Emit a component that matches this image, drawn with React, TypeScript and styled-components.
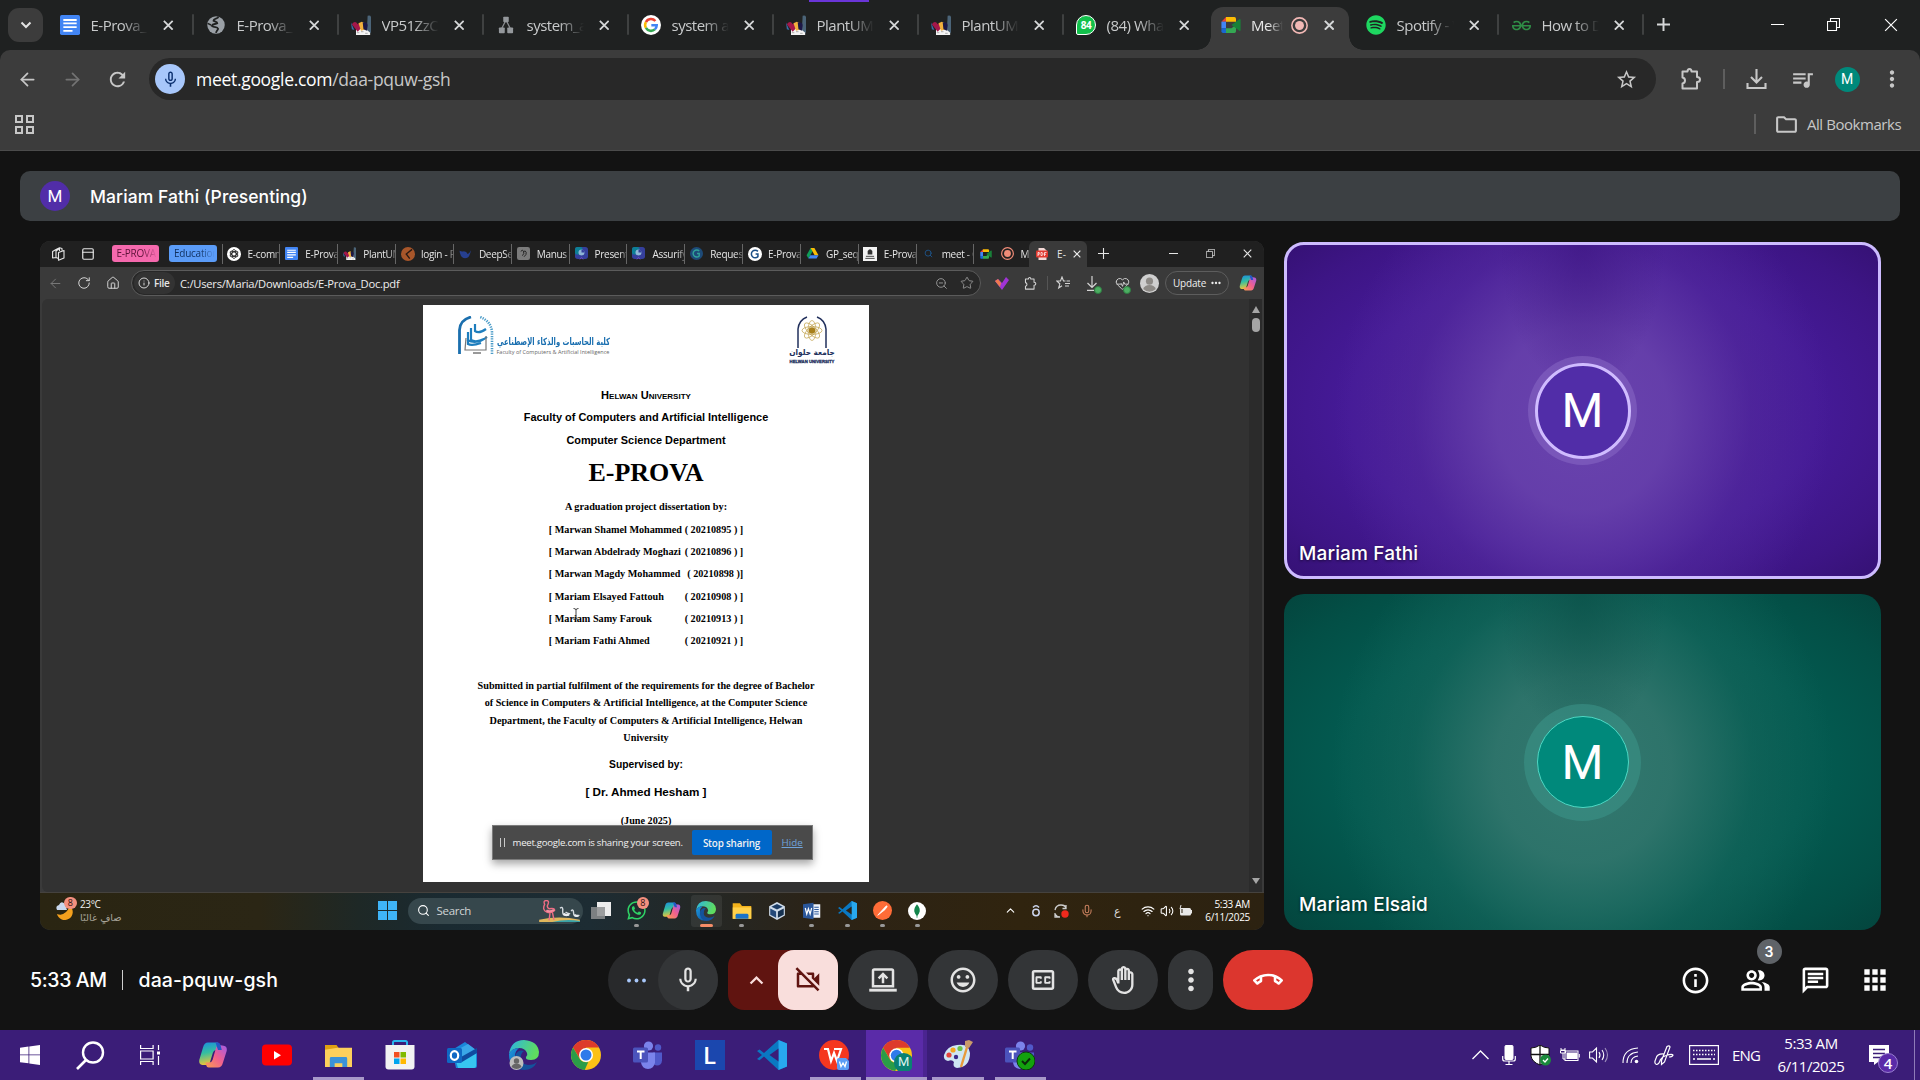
import React from 'react';
import styled, { createGlobalStyle, css } from 'styled-components';
import {
  MdMicNone, MdOutlineVideocamOff, MdOutlineMood, MdOutlineClosedCaption, MdOutlineBackHand,
  MdMoreVert, MdMoreHoriz, MdOutlineCallEnd, MdInfoOutline, MdOutlineChat, MdApps,
  MdStarBorder, MdQueueMusic, MdOutlineFolder, MdKeyboardArrowUp, MdRefresh,
} from 'react-icons/md';
import { FaWhatsapp, FaSpotify } from 'react-icons/fa';
import { SiGeeksforgeeks } from 'react-icons/si';
import {
  ArrowLeft, ArrowRight, RotateCw, House, Info, ZoomOut, Star, Search, ChevronUp,
  Wifi, Volume2, Mic, HeartPulse, PanelTop,
} from 'lucide-react';

const SEGOE = '"Open Sans", "Noto Sans", sans-serif';
const GOOGLE = 'Inter, Roboto, sans-serif';

const Global = createGlobalStyle`
  html, body { margin: 0; padding: 0; background: #131313; overflow: hidden; }
  * { box-sizing: border-box; }
  svg { display: block; flex: none; }
`;

/* ---------- shared pieces ---------- */

const Screen = styled.div`
  width: 1920px; height: 1080px; display: flex; flex-direction: column;
  background: #131313; overflow: hidden; font-family: ${SEGOE}; color: #fff;
`;
const Row = styled.div`display: flex; align-items: center;`;
const Cell = styled.div<{ $w: number; $ml?: number; $c?: string }>`
  width: ${p => p.$w}px; margin-left: ${p => p.$ml ?? 0}px; flex: none;
  display: flex; align-items: center; justify-content: center; color: ${p => p.$c ?? 'inherit'};
  position: relative;
`;

/* ---------- logos ---------- */

type L = { s?: number };
const Svg = ({ s = 20, vb = '0 0 24 24', children }: { s?: number; vb?: string; children: React.ReactNode }) => (
  <svg width={s} height={s} viewBox={vb} fill="none">{children}</svg>
);
const DocsLogo = ({ s }: L) => (
  <Svg s={s}><rect width="24" height="24" rx="2" fill="#4285f4" />
    <path d="M4 6h16M4 10h16M4 14.5h16M4 19h11" stroke="#fff" strokeWidth="2.2" /></Svg>
);
const GlobeLogo = ({ s }: L) => (
  <Svg s={s}><circle cx="12" cy="12" r="10.5" fill="#9aa0a6" />
    <path d="M15 2.500c-1.500 2.500-6 1.500-6 4.500 2 1.500 4.500.5 4.500 3-2 1.500-5.500 0-6.500 3 3 2.500 6.500.5 7.500 3.500-.5 2-2 2.500-2.500 5" stroke="#1f2121" strokeWidth="2.200" /><path d="M2 10l4 2" stroke="#1f2121" strokeWidth="1.800" /></Svg>
);
const PlantLogo = ({ s }: L) => (
  <Svg s={s}><path d="M6 14h17v10H6z" fill="#f4f4f4" /><path d="M20 1q3-1 4 1v20l-5-4z" fill="#4b6478" />
    <path d="M0 9l4 9-3-1z" fill="#3a6ea8" /><path d="M1 11q4-5 7 0l3-2 1 7-4 4z" fill="#a3174a" />
    <path d="M9 10l4-2 4 2 1 7-6 2z" fill="#f2b13c" /><path d="M14 9q6-1 6 4l-1 6-4-2z" fill="#1d1846" />
    <path d="M7 21h3M12 20h3M17 22h3" stroke="#bbb" strokeWidth="1.5" /></Svg>
);
const NodesLogo = ({ s }: L) => (
  <Svg s={s}><path d="M12 6L7 16M12 6l5 10" stroke="#8a8d91" strokeWidth="1.500" />
    <rect x="8.700" y="2" width="6.600" height="6.600" rx="1" fill="#94989c" /><rect x="3.500" y="15" width="7" height="7" rx="1" fill="#94989c" />
    <rect x="13.500" y="15" width="7" height="7" rx="1" fill="#94989c" /></Svg>
);
const GoogleLogo = ({ s }: L) => (
  <Svg s={s}><circle cx="12" cy="12" r="12" fill="#fff" />
    <path d="M17.3 7.2A7 7 0 0 0 5.9 8.5" stroke="#ea4335" strokeWidth="3" /><path d="M5.9 8.5a7 7 0 0 0 0 7" stroke="#fbbc04" strokeWidth="3" />
    <path d="M5.9 15.5a7 7 0 0 0 10.7 1.8" stroke="#34a853" strokeWidth="3" /><path d="M16.6 17.3a7 7 0 0 0 2.3-5.1H12.4" stroke="#4285f4" strokeWidth="3" /></Svg>
);
const MeetLogo = ({ s }: L) => (
  <Svg s={s}><path d="M6 2.500h10q2 0 2 2V8h-6V8H6z" fill="#fbbc04" /><path d="M6 2.500V8H.5z" fill="#ea4335" />
    <path d="M.5 8H6v8H.5z" fill="#4285f4" /><path d="M.5 16H6v5.500H2.500q-2 0-2-2z" fill="#1967d2" />
    <path d="M6 16h6.500l5.500-4v7.500q0 2-2 2H6z" fill="#34a853" /><path d="M18 8l-5.500 4 5.500 4 4 3q1.500.500 1.500-1V6q0-1.500-1.500-1z" fill="#188038" /></Svg>
);
const CopilotLogo = ({ s }: L) => (
  <Svg s={s}>
    <defs>
      <linearGradient id="cpA" x1="0" y1="0" x2="0.2" y2="1"><stop stopColor="#1b8de0" /><stop offset=".5" stopColor="#35bfa0" /><stop offset="1" stopColor="#e8c53a" /></linearGradient>
      <linearGradient id="cpB" x1="1" y1="0" x2="0" y2="1"><stop stopColor="#a05be8" /><stop offset=".5" stopColor="#f0608e" /><stop offset="1" stopColor="#f9a04e" /></linearGradient>
    </defs>
    <path d="M8 2h7.500q1.500 0 2 2l1 4h-4q-2 0-2.600 2.200L9.500 18q-.8 2-2.500 2H3.500Q.5 19.500 1 16L4 6q1-4 4-4z" fill="url(#cpA)" />
    <path d="M16 22H8.500q-1.500 0-2-2l-.6-2H9q2 0 2.700-2.200L14.500 6q.8-2 2.500-2l3.500.5q3 .5 2.500 4L20 18q-1 4-4 4z" fill="url(#cpB)" />
    <path d="M14 2h2q1.500 0 2 2l1 4h-3z" fill="#2457c5" /></Svg>
);
const YoutubeLogo = ({ s }: L) => (
  <Svg s={s} vb="0 0 30 30"><rect x="0" y="4.500" width="30" height="21" rx="4" fill="#f00" /><path d="M12 11v8.500l7-4.200z" fill="#fff" /></Svg>
);
const ExplorerLogo = ({ s }: L) => (
  <Svg s={s} vb="0 0 28 28"><path d="M0 3h12l2 3v6H0z" fill="#e0a012" /><path d="M0 8l13-2h15v20H0z" fill="#fdd05c" />
    <path d="M5 26V17q0-1.500 1.500-1.500h15q1.500 0 1.500 1.500v9h-5v-4h-8v4z" fill="#3c93d8" /></Svg>
);
const FolderLogo = ({ s }: L) => (
  <Svg s={s} vb="0 0 28 28"><path d="M1 3h10l3 4h13v18H1z" fill="#f3b21b" /><path d="M1 9h26v16H1z" fill="#ffd04a" />
    <path d="M5 25v-5q0-2 2-2h14q2 0 2 2v5z" fill="#1973c8" /></Svg>
);
const StoreLogo = ({ s }: L) => (
  <Svg s={s} vb="0 0 30 30"><path d="M8 5V2.500Q8 1 9.500 1h11Q22 1 22 2.500V5" stroke="#29b6ef" strokeWidth="2" />
    <path d="M0.500 5h29v21.500q0 3-3 3h-23q-3 0-3-3z" fill="#f2f2f2" />
    <path d="M9 12h5.500v5.500H9z" fill="#f25022" /><path d="M15.500 12H21v5.500h-5.500z" fill="#7fba00" /><path d="M9 18.500h5.500V24H9z" fill="#00a4ef" /><path d="M15.500 18.500H21V24h-5.500z" fill="#ffb900" /></Svg>
);
const OutlookLogo = ({ s }: L) => (
  <Svg s={s} vb="0 0 30 30"><path d="M5 10L18 2l12 9v15q0 2-2 2H9z" fill="#1a86d9" /><path d="M10 10L21 4l8 6-14 12z" fill="#3aa7e8" />
    <path d="M9 21l20-10v15q0 2-2 2H11z" fill="#37c5f0" /><path d="M14 17l16-9v5l-15 9z" fill="#0f4ca0" />
    <rect x="0" y="8" width="15" height="15" rx="1.500" fill="#0f68c4" /><ellipse cx="7.500" cy="15.500" rx="3.700" ry="4.300" stroke="#fff" strokeWidth="2.200" /></Svg>
);
const EdgeLogo = ({ s, user }: L & { user?: boolean }) => (
  <Svg s={s} vb="0 0 30 30">
    <defs>
      <linearGradient id="egA" x1="0" y1="0" x2="1" y2=".3"><stop stopColor="#2bb4e6" /><stop offset="1" stopColor="#5fdc5e" /></linearGradient>
      <linearGradient id="egB" x1="0" y1="0" x2="1" y2="1"><stop stopColor="#1c9ae0" /><stop offset="1" stopColor="#0d4f9e" /></linearGradient>
    </defs>
    <path d="M0 14Q2 0 15 0q14 1 15 12 0 8-8 8-6 0-5-3 2-2 1-4-2-5-8-5Q3 8 0 14z" fill="url(#egA)" />
    <path d="M0 14q3-6 10-6-4 3-4 8 0 8 9 13.800Q0 30 0 14z" fill="url(#egB)" />
    <path d="M12 15q-2 9 7 10 6 0 9-3-4 8-13 8Q5 27 6 16q3-7 9-5-2 1-3 4z" fill="#14529c" />
    {user && <><circle cx="7.500" cy="23" r="7" fill="#bdbdbd" /><circle cx="7.500" cy="21" r="2.700" fill="#666" /><path d="M2.500 27q1-3.500 5-3.500t5 3.500q-5 4-10 0z" fill="#666" /></>}
  </Svg>
);
const ChromeLogo = ({ s, badge }: L & { badge?: boolean }) => (
  <Svg s={s} vb="0 0 30 30"><circle cx="15" cy="15" r="15" fill="#fbc116" />
    <path d="M2 7.500A15 15 0 0 1 28 7.500H15L9 19z" fill="#dd3a2b" /><path d="M2 7.500L8.800 19q3 4 8.500 3l-3.600 7.900A15 15 0 0 1 2 7.500z" fill="#2a9c48" />
    <circle cx="15" cy="15" r="7" fill="#fff" /><circle cx="15" cy="15" r="5.500" fill="#2f7bea" />
    {badge && <circle cx="22" cy="22" r="9.500" fill="#0b8173" />}
  </Svg>
);
const TeamsLogo = ({ s, ok }: L & { ok?: boolean }) => (
  <Svg s={s} vb="0 0 30 30"><circle cx="15.500" cy="6" r="4.600" fill="#7b83eb" /><circle cx="25" cy="7.500" r="3.200" fill="#5059c9" />
    <path d="M20 12.500h9v8q-.5 5-5 5-3 0-4-3z" fill="#5059c9" /><path d="M8 12.500h14v10q-1 6-7 6.500-6-.5-7-6.500z" fill="#7b83eb" />
    <rect x="0" y="7.500" width="15" height="15" rx="1.500" fill="#4b53bc" /><path d="M4 11.500h7.500M7.700 11.500V19" stroke="#fff" strokeWidth="2" />
    {ok && <><circle cx="21" cy="21" r="9" fill="#13a10e" stroke="#0b3d0a" /><path d="M17 21l3 3 5-5.500" stroke="#0c2a0b" strokeWidth="2" /></>}
  </Svg>
);
const CodeLogo = ({ s, hole = '#3b1d78' }: L & { hole?: string }) => (
  <Svg s={s} vb="0 0 30 30"><path d="M21.500 0L30 3.500v23L21.500 30 7 16.500l-4.500 3.800L0 19l5-4-5-4 2.500-1.500L7 13z" fill="#0a78c2" />
    <path d="M21.500 0L30 3.500v23L21.500 30z" fill="#28a8ee" /><path d="M21.500 8.500V21.500L12.500 15z" fill={hole} /></Svg>
);
const WpsLogo = ({ s }: L) => (
  <Svg s={s} vb="0 0 30 30"><circle cx="15" cy="15" r="15" fill="#f5371f" />
    <path d="M5 9h4l3 12 3-8 3 8 4-12H15" stroke="#fff" strokeWidth="2.200" /><path d="M18 20q0-2 2-2h7l3 3v7q0 2-2 2h-8q-2 0-2-2z" fill="#5b9cf5" />
    <path d="M20.500 21.500l1.500 5 2-3.500 2 3.500 1.500-5" stroke="#fff" strokeWidth="1.300" /></Svg>
);
const PaintLogo = ({ s }: L) => (
  <Svg s={s} vb="0 0 30 30"><path d="M14 5q12-2 13 8 0 14-13 15-5-1-3-6-2-3-6-1Q0 20 1 15 4 6 14 5z" fill="#cfe6f3" />
    <circle cx="6" cy="15" r="2.600" fill="#e5443a" /><circle cx="10" cy="10" r="2.600" fill="#f5a623" /><circle cx="17" cy="8.500" r="2.600" fill="#6cc04a" />
    <circle cx="13" cy="17" r="2.200" fill="#3b2a8c" /><path d="M25 4L18 27" stroke="#e79a3c" strokeWidth="2.400" /><path d="M22 1l4-1 4 2-4 6-4-1z" fill="#c99a6a" /></Svg>
);
const PostmanLogo = ({ s }: L) => (
  <Svg s={s}><circle cx="12" cy="12" r="12" fill="#ff6c37" /><path d="M6 18l8-9 3-3 1 1-3 4z" fill="#fff" stroke="#fff" strokeWidth="1" /></Svg>
);
const MongoLogo = ({ s }: L) => (
  <Svg s={s}><circle cx="12" cy="12" r="12" fill="#fff" /><path d="M12 3q4.500 5 3.500 10-1 4-3.500 5.500Q9.500 17 8.500 13 7.500 8 12 3z" fill="#13854c" /><path d="M12 14v7" stroke="#13854c" /></Svg>
);
const BoxLogo = ({ s }: L) => (
  <Svg s={s}><path d="M12 0l10.500 5.500v12.500L12 24 1.500 18V5.500z" fill="#cfdcea" /><path d="M12 2.500l7.500 3.800L12 10 4.500 6.300z" fill="#1b3c66" />
    <path d="M3 8.500l7.800 4v8.500L3 17z" fill="#23497a" /><path d="M21 8.500l-7.800 4v8.500L21 17z" fill="#15304f" /></Svg>
);
const WordLogo = ({ s }: L) => (
  <Svg s={s}><rect x="10" y="3" width="13" height="18" fill="#eef3fb" /><path d="M15 7h6M15 10h6M15 13h6M15 16h6" stroke="#2b579a" strokeWidth="1.400" />
    <path d="M0 3l14-2v22L0 21z" fill="#2b579a" /><path d="M3 8l2 8 2.200-7L9.500 16l2-8" stroke="#fff" strokeWidth="1.600" /></Svg>
);
const DriveLogo = ({ s }: L) => (
  <Svg s={s}><path d="M8.500 2h7l-7.500 13-3.500 6L1 15z" fill="#0f9d58" /><path d="M8.500 2h7L23 15h-7z" fill="#fbbc04" /><path d="M8 15h15l-3.500 6h-15z" fill="#4285f4" /></Svg>
);
const PdfLogo = ({ s }: L) => (
  <Svg s={s}><path d="M5 0h11l5 5v19H5z" fill="#f4d9d6" /><rect x="0" y="5" width="24" height="14" rx="2" fill="#e0392f" />
    <path d="M4 16V9h2.500v3.500H4M10 9v6h2q2-1 2-3t-2-3zM17 16V9h4M17 12.500h3" stroke="#fff" strokeWidth="1.500" /></Svg>
);
const Disc = ({ s, bg, fg }: { s?: number; bg: string; fg: string }) => (
  <Svg s={s}><circle cx="12" cy="12" r="12" fill={bg} /><path d="M17 7.500a6.500 6.500 0 1 0 0 9V12h-4" stroke={fg} strokeWidth="2.600" /></Svg>
);
const OpenAiLogo = ({ s }: L) => (
  <Svg s={s}><circle cx="12" cy="12" r="12" fill="#fff" />
    <g stroke="#222" strokeWidth="1.500"><ellipse cx="12" cy="12" rx="3.500" ry="7.500" /><ellipse cx="12" cy="12" rx="3.500" ry="7.500" transform="rotate(60 12 12)" /><ellipse cx="12" cy="12" rx="3.500" ry="7.500" transform="rotate(120 12 12)" /></g></Svg>
);
const LoginLogo = ({ s }: L) => (
  <Svg s={s}><circle cx="12" cy="12" r="12" fill="#a8562a" /><path d="M19 4L9 12l6 8" stroke="#2a1a14" strokeWidth="2.400" /></Svg>
);
const WhaleLogo = ({ s }: L) => (
  <Svg s={s}><path d="M1 7q4 2 8 1 5 0 7 5 4-2 6-7-1 8-5 13Q9 23 4 17 1 12 1 7z" fill="#263f8f" /></Svg>
);
const ManusLogo = ({ s }: L) => (
  <Svg s={s}><rect width="24" height="24" rx="4" fill="#7b7b7b" /><path d="M7 8q3-4 5 0t-2 8M12 8q4-2 5 2t-4 8" stroke="#222" strokeWidth="1.800" /></Svg>
);
const SlidesLogo = ({ s }: L) => (
  <Svg s={s}><rect width="24" height="22" rx="5" fill="#353f9c" /><rect width="14" height="14" rx="4" fill="#0d7f96" /><circle cx="12" cy="10" r="5.500" fill="#8fb6d6" /><path d="M12 10V4.500a5.500 5.500 0 0 1 5.500 5.500z" fill="#353f9c" /><path d="M12 19l-3 4M12 19l3 4" stroke="#7b4bc0" strokeWidth="1.500" /></Svg>
);
const UniLogo = ({ s }: L) => (
  <Svg s={s}><rect width="24" height="24" fill="#f3f3f3" /><path d="M8 13V7q4-6 8 0v6z" fill="#333" /><path d="M5 16h14M4 19.500h16" stroke="#333" strokeWidth="1.500" /></Svg>
);
const RecDot = ({ s = 16, c = '#f2b8b5' }: L & { c?: string }) => (
  <Svg s={s}><circle cx="12" cy="12" r="10.800" stroke={c} strokeWidth="2.200" /><circle cx="12" cy="12" r="6.300" fill={c} /></Svg>
);
const GroupIcon = ({ s }: L) => (
  <svg width={s} height={s} viewBox="0 0 24 24" fill="currentColor">
    <path d="M16.670 13.130C18.040 14.060 19 15.320 19 17v3h4v-3c0-2.180-3.570-3.470-6.330-3.870zM15 12c2.210 0 4-1.790 4-4s-1.790-4-4-4c-.47 0-.91.1-1.330.24C14.500 5.270 15 6.580 15 8s-.5 2.730-1.330 3.760c.42.14.86.24 1.330.24z" />
    <path fillRule="evenodd" d="M9 12c2.210 0 4-1.790 4-4s-1.790-4-4-4-4 1.790-4 4 1.790 4 4 4zm0-6c1.100 0 2 .9 2 2s-.9 2-2 2-2-.9-2-2 .9-2 2-2z" />
    <path fillRule="evenodd" d="M9 13c-2.670 0-8 1.340-8 4v3h16v-3c0-2.660-5.330-4-8-4zm6 5H3v-.99C3.200 16.290 6.300 15 9 15s5.800 1.290 6 2v1z" />
  </svg>
);
const PuzzleIcon = ({ s, w }: { s: number; w: number }) => (
  <svg width={s} height={s} viewBox="0 0 22 22" fill="none" stroke="currentColor" strokeWidth={w} strokeLinejoin="round"><path d="M2.500 3.500h5q0-2.500 2-2.500t2 2.500h5.500v5.500q3 0 3 2.500t-3 2.500V20.500H2.500V15.500q2.500-.5 2.500-3t-2.500-3z" /></svg>
);
const Cross = ({ s = 10, w = 1.8 }: { s?: number; w?: number }) => (
  <svg width={s} height={s} viewBox="0 0 10 10"><path d="M.8.8l8.400 8.400M9.200.8L.8 9.200" stroke="currentColor" strokeWidth={w * 10 / s} /></svg>
);
const Plus = ({ s = 13, w = 1.8 }: { s?: number; w?: number }) => (
  <svg width={s} height={s} viewBox="0 0 12 12"><path d="M6 0v12M0 6h12" stroke="currentColor" strokeWidth={w} /></svg>
);
const Restore = ({ s = 13 }: L) => (
  <svg width={s} height={s} viewBox="0 0 13 13" fill="none" stroke="currentColor" strokeWidth="1.100"><path d="M.5 3.500h9v9h-9zM3.500 3.500v-3h9v9h-3" /></svg>
);
const Dash = ({ s = 13 }: L) => (
  <svg width={s} height="2" viewBox={`0 0 ${s} 2`}><path d={`M0 .5h${s}`} stroke="currentColor" /></svg>
);

/* ---------- Chrome ---------- */

const TabStrip = styled.div`
  height: 50px; background: #1f2121; display: flex; align-items: flex-start; flex: none; padding-left: 8px;
  position: relative;
`;
const AccentLine = styled.div`position: absolute; left: 809px; top: 0; width: 60px; height: 1.500px; background: #6a35d8;`;
const TabSearch = styled.div`
  width: 35px; height: 34px; margin: 8px 4.500px 0 0; border-radius: 11px; background: #3c3c3c; flex: none;
  display: flex; align-items: center; justify-content: center;
`;
const Tab = styled.div<{ $active?: boolean; $first?: boolean; $sep?: boolean }>`
  width: 145px; height: 36px; margin-top: 7px; flex: none; display: flex; align-items: center;
  padding-left: ${p => (p.$first ? 12.5 : 13.5)}px; position: relative;
  ${p => p.$sep && css`&::after { content: ''; position: absolute; right: -1px; top: 7px; width: 2px; height: 21px; background: #3f4141; border-radius: 1px; }`}
  ${p => p.$active && css`
    background: #3c3c3c; border-radius: 12px 12px 0 0; height: 43px; padding-bottom: 7px; width: 137.500px; margin-left: 3.500px; margin-right: 4px; padding-left: 9.500px;
    &::before, &::after { content: ''; position: absolute; bottom: 0; width: 14px; height: 14px; }
    &::before { left: -14px; background: radial-gradient(circle at 0 0, transparent 13.500px, #3c3c3c 14px); }
    &::after { right: -14px; background: radial-gradient(circle at 100% 0, transparent 13.500px, #3c3c3c 14px); }
  `}
`;
const TabTitle = styled.div<{ $w?: number; $on?: boolean; $ml?: number }>`
  margin-left: ${p => p.$ml ?? 10.5}px; width: ${p => p.$w ?? 57}px; overflow: hidden; white-space: nowrap;
  font-size: 15px; letter-spacing: -0.5px; line-height: 22px; color: ${p => (p.$on ? '#e8e8e8' : '#c8cacb')};
  mask-image: linear-gradient(90deg, #000 55%, transparent 100%);
`;
const TabClose = styled.div<{ $ml?: number }>`margin-left: ${p => p.$ml ?? 15.5}px; color: #d5d7d8;`;
const CaptionCell = styled.div`height: 49px; display: flex; align-items: center;`;

const Toolbar = styled.div`
  height: 50px; background: #3c3c3c; border-radius: 10px 10px 0 0; display: flex; align-items: center; flex: none;
  padding-top: 8px; color: #c7c7c7;
`;
const ToolbarBack = styled.div`background: #1f2121; flex: none;`;
const Omnibox = styled.div`
  width: 1507px; height: 42px; margin-left: 17px; border-radius: 21px; background: #282828; display: flex; align-items: center;
  padding: 0 18px 0 6px; flex: none;
`;
const MicChip = styled.div`width: 30px; height: 30px; border-radius: 50%; background: #a8c7fa; color: #0b2f6e; display: flex; align-items: center; justify-content: center;`;
const Url = styled.div`
  margin-left: 11px; flex: 1; font-size: 17.500px; letter-spacing: -0.3px; color: #c7c7c7;
  b { font-weight: 400; color: #fff; }
`;
const Bookmarks = styled.div`
  height: 51px; background: #3c3c3c; border-bottom: 1px solid #4b4b4b; display: flex; align-items: center; flex: none;
  padding: 0 18px 2px 15px; justify-content: space-between; color: #c7c7c7;
`;
const BookText = styled.div`font-size: 15px; letter-spacing: -0.45px; margin-left: 8px; white-space: nowrap; width: 95px;`;
const VLine = styled.div<{ $h: number; $c: string; $w?: number; $ml?: number; $mr?: number }>`
  width: ${p => p.$w ?? 2}px; height: ${p => p.$h}px; background: ${p => p.$c}; flex: none;
  margin-left: ${p => p.$ml ?? 0}px; margin-right: ${p => p.$mr ?? 0}px;
`;
const Round = styled.div<{ $s: number; $bg: string; $f: number }>`
  width: ${p => p.$s}px; height: ${p => p.$s}px; border-radius: 50%; background: ${p => p.$bg}; color: #fff; flex: none;
  display: flex; align-items: center; justify-content: center; font: 400 ${p => p.$f}px Roboto, sans-serif;
`;
const WaDisc = styled.div`
  width: 20px; height: 20px; border-radius: 50% 50% 50% 2px; background: #12c04b; border: 1.500px solid #fff;
  display: flex; align-items: center; justify-content: center; font: 700 10px "Open Sans", sans-serif; color: #fff; letter-spacing: -0.500px;
`;

const chromeTabs: { title: string; icon: React.ReactNode; sep?: boolean; active?: boolean }[] = [
  { title: 'E-Prova_Doc', icon: <DocsLogo />, sep: true },
  { title: 'E-Prova_Doc', icon: <GlobeLogo />, sep: true },
  { title: 'VP51ZzCm', icon: <PlantLogo />, sep: true },
  { title: 'system_arch', icon: <NodesLogo />, sep: true },
  { title: 'system arch', icon: <GoogleLogo />, sep: true },
  { title: 'PlantUML', icon: <PlantLogo />, sep: true },
  { title: 'PlantUML', icon: <PlantLogo />, sep: true },
  { title: '(84) WhatsApp', icon: <WaDisc>84</WaDisc> },
  { title: 'Meet', icon: <MeetLogo />, active: true },
  { title: 'Spotify - W', icon: <FaSpotify size={20} color="#1ed760" />, sep: true },
  { title: 'How to Dr', icon: <SiGeeksforgeeks size={19} color="#2f8d46" />, sep: true },
];

const ChromeHead = () => (
  <>
    <TabStrip>
      <AccentLine />
      <TabSearch><svg width="12" height="8" viewBox="0 0 12 8"><path d="M1.500 1.500L6 6l4.500-4.500" stroke="#e3e3e3" strokeWidth="2" fill="none" /></svg></TabSearch>
      {chromeTabs.map((t, i) => (
        <Tab key={i} $active={t.active} $first={i === 0} $sep={t.sep}>
          <Cell $w={20}>{t.icon}</Cell>
          <TabTitle $w={t.active ? 32 : 57} $on={t.active}>{t.title}</TabTitle>
          {t.active
            ? <><Cell $w={17} $ml={7.5}><RecDot s={17} /></Cell><TabClose $ml={16}><Cross s={10.5} w={2} /></TabClose></>
            : <TabClose $ml={i === 0 ? 15.5 : 15}><Cross s={10.5} /></TabClose>}
        </Tab>
      ))}
      <Row>
        <Cell $w={20} $ml={11} $c="#d5d7d8"><CaptionCell><Plus /></CaptionCell></Cell>
        <Cell $w={20} $ml={94}><CaptionCell><Dash /></CaptionCell></Cell>
        <Cell $w={20} $ml={36}><CaptionCell><Restore /></CaptionCell></Cell>
        <Cell $w={20} $ml={37.5}><CaptionCell><Cross s={14} w={1.2} /></CaptionCell></Cell>
      </Row>
    </TabStrip>
    <ToolbarBack>
      <Toolbar>
        <Cell $w={30} $ml={12.5}><ArrowLeft size={21} strokeWidth={2} /></Cell>
        <Cell $w={30} $ml={14.5} $c="#737373"><ArrowRight size={21} strokeWidth={2} /></Cell>
        <Cell $w={30} $ml={15}><MdRefresh size={23} /></Cell>
        <Omnibox>
          <MicChip><MdMicNone size={19} /></MicChip>
          <Url><b>meet.google.com</b>/daa-pquw-gsh</Url>
          <MdStarBorder size={23} />
        </Omnibox>
        <Cell $w={24} $ml={23}><PuzzleIcon s={22} w={2} /></Cell>
        <VLine $h={20} $c="#5e5e5e" $ml={19.5} />
        <Cell $w={24} $ml={20}>
          <svg width="21" height="21" viewBox="0 0 21 21" fill="none" stroke="currentColor" strokeWidth="2.100"><path d="M10.500 0v13M5 8l5.500 5.500L16 8M1.500 14v5h18v-5" /></svg>
        </Cell>
        <Cell $w={24} $ml={21.5}><MdQueueMusic size={25} /></Cell>
        <Cell $w={26} $ml={20}><Round $s={25} $bg="#00897b" $f={14}>M</Round></Cell>
        <Cell $w={24} $ml={20}><MdMoreVert size={26} /></Cell>
      </Toolbar>
    </ToolbarBack>
    <Bookmarks>
      <svg width="19" height="19" viewBox="0 0 19 19" fill="none" stroke="currentColor" strokeWidth="2"><path d="M1 1h6v6H1zM12 1h6v6h-6zM1 12h6v6H1zM12 12h6v6h-6z" /></svg>
      <Row><VLine $h={20} $c="#5e5e5e" $mr={18} /><MdOutlineFolder size={25} /><BookText>All Bookmarks</BookText></Row>
    </Bookmarks>
  </>
);

/* ---------- Shared screen ---------- */

const Shared = styled.div`
  width: 1224px; height: 689px; border-radius: 10px; overflow: hidden; background: #3a3a3a; flex: none;
  display: flex; flex-direction: column;
`;
const EdgeTabs = styled.div`height: 26px; background: #202020; display: flex; align-items: center; color: #e6e6e6; padding-bottom: 1px; flex: none;`;
const Pill = styled.div<{ $bg: string; $ml: number; $c: string }>`
  width: 47.500px; height: 17px; margin-left: ${p => p.$ml}px; border-radius: 3px; background: ${p => p.$bg}; color: ${p => p.$c}; padding-left: 5px;
  font-size: 10px; line-height: 16px; overflow: hidden; white-space: nowrap; letter-spacing: -0.25px; flex: none;
  span { display: block; mask-image: linear-gradient(90deg, #000 60%, transparent 95%); }
`;
const EdgeTab = styled.div`
  width: 57.850px; height: 20px; border-left: 1px solid #666; display: flex; align-items: center; overflow: hidden; flex: none; padding-left: 5px;
  font-size: 10px; letter-spacing: -0.3px; white-space: nowrap; gap: 7px;
  span { width: 32px; overflow: hidden; mask-image: linear-gradient(90deg, #000 80%, transparent 110%); }
`;
const EdgeMeet = styled.div`
  width: 56px; height: 20px; border-left: 1px solid #666; display: flex; align-items: center; padding-left: 6px; font-size: 10px; overflow: hidden; flex: none;
  em { font-style: normal; margin-left: 6px; mask-image: linear-gradient(90deg, #000 40%, transparent 80%); }
`;
const EdgeActive = styled.div`
  width: 58px; height: 26px; background: #3a3a3a; border-radius: 6px 6px 0 0; display: flex; align-items: center; padding-left: 7px;
  font-size: 10px; flex: none; align-self: flex-end; margin-bottom: -1px;
`;
const EdgeBar = styled.div`height: 32px; display: flex; align-items: center; color: #d4d4d4; flex: none;`;
const EdgeOmni = styled.div`
  width: 850px; height: 26px; border-radius: 13px; border: 1px solid #5b5b5b; background: #282828; margin-left: 9px; display: flex; align-items: center;
  flex: none; color: #9a9a9a;
`;
const FileChip = styled.div`
  height: 22px; width: 41px; border-radius: 11px; background: #333; margin-left: 2px; display: flex; align-items: center; padding-left: 4px; gap: 4px;
  font-size: 10px; font-weight: 600; color: #e6e6e6; letter-spacing: -0.3px;
`;
const EdgeUrl = styled.div`font-size: 11.200px; color: #eee; margin-left: 5px; flex: 1; letter-spacing: -0.250px;`;
const UpdatePill = styled.div`
  width: 64px; height: 24px; border: 1px solid #5d5d5d; border-radius: 12px; display: flex; align-items: center; justify-content: space-between; padding: 0 5px 0 7px;
  font-size: 10px; letter-spacing: -0.2px; margin-left: 6px; color: #eee; flex: none;
`;
const OkDot = styled.i`position: absolute; right: 0; bottom: -3px; width: 8px; height: 8px; border-radius: 50%; background: #4cae62; border: 1px solid #2f7d42;`;
const Viewer = styled.div`
  flex: none; margin: 0 2px 0 2px; background: #323232; border-radius: 6px; display: flex; position: relative; padding-top: 6px;
  padding-left: 381px; justify-content: space-between; height: 593px;
`;
const ScrollCol = styled.div`
  width: 13px; margin-top: -6px; background: #2b2b2b; display: flex; flex-direction: column; align-items: center; padding: 7px 0 8px; color: #a5a5a5;
`;
const Thumb = styled.div`width: 8px; height: 14px; border-radius: 4px; background: #a5a5a5; margin-top: 5px; margin-bottom: auto;`;

const Paper = styled.div`width: 446px; height: 577px; background: #fff; color: #000; display: flex; flex-direction: column; align-items: center; position: relative;`;
const PaperHead = styled.div`height: 79px; width: 100%; display: flex; justify-content: space-between; padding: 11px 34px 0 34.500px;`;
const FacultyLogo = styled.div`display: flex; gap: 3px;`;
const FacultyText = styled.div`
  padding-top: 18px; width: 114px; white-space: nowrap; text-align: left;
`;
const FacultyAr = styled.div`
  font: 700 10px/15px "DejaVu Sans Condensed", "DejaVu Sans", sans-serif; font-stretch: condensed; color: #1a6fb0; direction: rtl; width: max-content;
  transform: scaleX(0.76); transform-origin: left;
`;
const FacultyEn = styled.div`font: 400 5.500px/7px "Open Sans", sans-serif; color: #666;`;
const UniBlock = styled.div`
  display: flex; flex-direction: column; align-items: center; width: 46px; padding-top: 0; color: #22305c; white-space: nowrap;
`;
const UniAr = styled.div`font: 700 8.200px/10px "DejaVu Sans Condensed", "DejaVu Sans", sans-serif; font-stretch: condensed; margin-top: -1px;`;
const UniEn = styled.div`font: 700 4.250px/7px "Liberation Sans", sans-serif; margin-top: 1px; -webkit-text-stroke: 0.300px #22305c;`;
const Line = styled.div<{ $h: number; $f: number; $sans?: boolean; $mt?: number; $ls?: number; $caps?: boolean }>`
  height: ${p => p.$h}px; line-height: ${p => p.$h}px; font-size: ${p => p.$f}px; font-weight: 700; margin-top: ${p => p.$mt ?? 0}px;
  font-family: ${p => (p.$sans ? '"Liberation Sans", Arial, sans-serif' : '"Liberation Serif", "Times New Roman", serif')};
  letter-spacing: ${p => p.$ls ?? 0}px; white-space: pre; flex: none; ${p => p.$caps && 'font-variant: small-caps;'}
`;
const Student = styled.div`
  width: 194.500px; height: 22.200px; display: flex; justify-content: space-between; white-space: pre; flex: none;
  font: 700 10.200px/22.200px "Liberation Serif", serif;
`;
const Cursor = styled.div`position: absolute; left: 150px; top: 303px;`;
const SharePop = styled.div`
  position: absolute; left: 449.500px; top: 526px; width: 321px; height: 35px; background: #4a4a4a; border: 1px solid #7b7b7b; box-shadow: 0 4px 8px rgba(0,0,0,.35);
  display: flex; align-items: center; font-size: 10px; color: #f1f1f1; white-space: nowrap;
`;
const PauseBars = styled.div`width: 5px; height: 9px; border: solid #c9c9c9; border-width: 0 1.500px; margin-left: 7px;`;
const PopText = styled.div`margin-left: 8px; width: 171px; font-size: 9.600px; letter-spacing: -0.250px;`;
const StopBtn = styled.div`width: 80px; height: 25px; margin-left: 8px; border-radius: 2px; background: #0067c9; font-weight: 600; font-size: 9.900px; display: flex; align-items: center; justify-content: center; letter-spacing: -0.2px; flex: none;`;
const HideLink = styled.div`margin-left: 10px; font-size: 9.800px; color: #6fa3da; text-decoration: underline;`;

const InnerTask = styled.div`
  height: 38px; flex: none; display: flex; align-items: center; font-size: 10.500px; position: relative; border-top: 1px solid #45423e; padding-bottom: 2px;
  background: linear-gradient(90deg, #2a2512 0%, #2b2615 18%, #1e2826 26%, #1a2a31 33%, #1d2c33 45%, #252724 55%, #2c2316 64%, #30240f 80%, #2c2211 100%);
`;
const Weather = styled.div`width: 20px; height: 26px; margin-left: 15px; position: relative; flex: none;`;
const CountBadge = styled.div<{ $l: number; $t: number }>`
  position: absolute; left: ${p => p.$l}px; top: ${p => p.$t}px; width: 12.500px; height: 12.500px; border-radius: 50%; background: #f4907f; color: #301310; font-size: 9px; line-height: 12.500px; text-align: center;
`;
const WeatherText = styled.div`margin-left: 5px; width: 100px; flex: none;`;
const Degrees = styled.div`line-height: 13px; font-size: 10px; letter-spacing: -0.4px; color: #eee;`;
const Sky = styled.div`font: 9.800px/13px "DejaVu Sans", sans-serif; color: #a9a59a;`;
const SearchPill = styled.div`
  width: 175px; height: 26px; border-radius: 13px; background: #36474c; margin-left: 11px; display: flex; align-items: center; padding-left: 9px; flex: none;
  span { margin-left: 7px; flex: 1; font-size: 11.500px; letter-spacing: -0.3px; color: #d0d5d6; }
`;
const TaskIcon = styled.div<{ $on?: boolean; $run?: boolean }>`
  width: 35.150px; height: 34px; display: flex; align-items: center; justify-content: center; position: relative; flex: none;
  ${p => p.$on && css`&::before { content: ''; position: absolute; inset: 1px 2px; background: rgba(255,255,255,.07); border-radius: 3px; } `}
  ${p => (p.$run || p.$on) && css`&::after { content: ''; position: absolute; bottom: 1px; width: ${p.$on ? 13 : 5}px; height: 2.500px; border-radius: 2px; background: ${p.$on ? '#f58d68' : '#989898'}; }`}
  svg { position: relative; }
`;
const ArLetter = styled.div`width: 14px; margin-left: 16px; text-align: center; font: 11px/13px "DejaVu Sans", sans-serif; color: #ddd; padding-top: 2px;`;
const InnerClock = styled.div`margin-left: auto; margin-right: 14px; font-size: 10px; line-height: 13px; text-align: right; letter-spacing: -0.3px;`;

const edgeTabs: [string, React.ReactNode][] = [
  ['E-commerce', <OpenAiLogo s={14} />], ['E-Prova_', <DocsLogo s={13} />], ['PlantUML', <PlantLogo s={13} />], ['login - P', <LoginLogo s={14} />],
  ['DeepSeek', <WhaleLogo s={13} />], ['Manus', <ManusLogo s={13} />], ['Presenta', <SlidesLogo s={13} />], ['Assurify', <SlidesLogo s={13} />],
  ['Request', <Disc s={13} bg="#1d4a78" fg="#31a29a" />], ['E-Prova', <Disc s={14} bg="#fff" fg="#1b4f86" />], ['GP_sequ', <DriveLogo s={13} />],
  ['E-Prova', <UniLogo s={14} />], ['meet - G', <Search size={9} color="#1d5fa0" />],
];
const students: [string, string][] = [
  ['[ Marwan Shamel Mohammed', '( 20210895 ) ]'], ['[ Marwan Abdelrady Moghazi', '( 20210896 ) ]'], ['[ Marwan Magdy Mohammed', '( 20210898 )]'],
  ['[ Mariam Elsayed Fattouh', '( 20210908 ) ]'], ['[ Mariam Samy Farouk', '( 20210913 ) ]'], ['[ Mariam Fathi Ahmed', '( 20210921 ) ]'],
];

const SharedScreen = () => (
  <Shared>
    <EdgeTabs>
      <Cell $w={16} $ml={10.5}><svg width="13" height="14" viewBox="0 0 13 14" fill="none" stroke="currentColor" strokeWidth="1.100"><path d="M.6 4.500L4 2.500v8L.6 11zM4 4l3.500-2.500V4M4 10.500l2.500 1M6.500 5.500l5.500-2v7.500L6.500 13.300zM4 2.500L7.500.800 10 1.500v2" strokeLinejoin="round" /></svg></Cell>
      <Cell $w={16} $ml={13}><PanelTop size={14} strokeWidth={2} /></Cell>
      <Pill $bg="#f569ad" $c="#5b1238" $ml={16}><span>E-PROVA</span></Pill>
      <Pill $bg="#5b9cf8" $c="#10305f" $ml={10}><span>Education</span></Pill>
      <Cell $w={5} />
      {edgeTabs.map(([t, ic], i) => <EdgeTab key={i}><Cell $w={13}>{ic}</Cell><span>{t}</span></EdgeTab>)}
      <EdgeMeet><MeetLogo s={12} /><Cell $w={14} $ml={8}><RecDot s={13} c="#f08c78" /></Cell><em>Me</em></EdgeMeet>
      <EdgeActive><PdfLogo s={12} /><Cell $w={18} $ml={4}>E-</Cell><Cell $w={10} $ml={2}><Cross s={8} w={1.200} /></Cell></EdgeActive>
      <Cell $w={12} $ml={10}><Plus s={11} w={1.200} /></Cell>
      <Cell $w={12} $ml={58}><Dash s={9} /></Cell>
      <Cell $w={12} $ml={25}><Restore s={9} /></Cell>
      <Cell $w={12} $ml={25}><Cross s={9} w={1.100} /></Cell>
    </EdgeTabs>
    <EdgeBar>
      <Cell $w={18} $ml={6} $c="#777"><ArrowLeft size={15} strokeWidth={1.600} /></Cell>
      <Cell $w={18} $ml={11}><RotateCw size={14} strokeWidth={1.700} /></Cell>
      <Cell $w={18} $ml={11}><House size={14} strokeWidth={1.700} /></Cell>
      <EdgeOmni>
        <FileChip><Info size={12} strokeWidth={1.800} /><span>File</span></FileChip>
        <EdgeUrl>C:/Users/Maria/Downloads/E-Prova_Doc.pdf</EdgeUrl>
        <Cell $w={14}><ZoomOut size={13} strokeWidth={1.700} /></Cell>
        <Cell $w={14} $ml={11.5}><Star size={14} strokeWidth={1.500} /></Cell>
        <Cell $w={6} />
      </EdgeOmni>
      <Cell $w={14} $ml={13.5}><svg width="14" height="13" viewBox="0 0 14 13"><path d="M0 4l3-2 4 4 4-6 3 3-7 10z" fill="#a033d6" /><path d="M0 4l3-2 3 4-1 4z" fill="#ee7a4e" /></svg></Cell>
      <Cell $w={14} $ml={15}><PuzzleIcon s={13} w={1.800} /></Cell>
      <VLine $w={1} $h={14} $c="#555" $ml={9} />
      <Cell $w={16} $ml={7.5}><svg width="14" height="14" viewBox="0 0 14 14" fill="none" stroke="currentColor" strokeWidth="1.100"><path d="M9.500 5H7.500L6 1 4.500 5H.8l3 2.800L2.700 12 6 9.700M9 7.500h5M9 10h4M10.500 5H14" /></svg></Cell>
      <Cell $w={18} $ml={13}><svg width="14" height="15" viewBox="0 0 14 15" fill="none" stroke="currentColor" strokeWidth="1.200"><path d="M6 0v11M1.500 7L6 11.500 10.500 7M1 14.300h7" /></svg><OkDot /></Cell>
      <Cell $w={18} $ml={11}><HeartPulse size={15} strokeWidth={1.500} /><OkDot /></Cell>
      <Cell $w={19} $ml={9}><Svg s={19}><circle cx="12" cy="12" r="12" fill="#cfcfcf" /><circle cx="12" cy="9" r="4.500" fill="#8d8a86" /><path d="M4 19q2-5 8-5t8 5q-8 7-16 0z" fill="#8d8a86" /></Svg></Cell>
      <UpdatePill>Update<MdMoreHoriz size={14} /></UpdatePill>
      <Cell $w={18} $ml={10}><CopilotLogo s={18} /></Cell>
    </EdgeBar>
    <Viewer>
      <Paper>
        <PaperHead>
          <FacultyLogo>
            <svg width="36" height="38" viewBox="0 0 36 38" fill="none">
              <path d="M1.500 38V14Q2 4 13 1" stroke="#1b6fae" strokeWidth="2.800" />
              <path d="M34 38V16Q33 5 22 1" stroke="#4c9cc8" strokeWidth="2.600" strokeDasharray="1.300 1.100" />
              <path d="M10 16v12q4 2 13-1M13 12v12q5 3 13-1M17 8v7q4 3 11-2M9 24q10 5 20-3" stroke="#1d7dbd" strokeWidth="2.200" />
              <path d="M8 22l-1 12h21V20" stroke="#777" strokeWidth="1.200" /><path d="M15 37h8" stroke="#777" strokeWidth="1.500" />
            </svg>
            <FacultyText><FacultyAr>كلية الحاسبات والذكاء الإصطناعي</FacultyAr><FacultyEn>Faculty of Computers &amp; Artificial Intelligence</FacultyEn></FacultyText>
          </FacultyLogo>
          <UniBlock>
            <svg width="32" height="32" viewBox="0 0 32 32" fill="none">
              <path d="M2 32V13Q3 4 11 1M30 32V13Q29 4 21 1" stroke="#22305c" strokeWidth="1.500" />
              <g stroke="#c0a04a" strokeWidth=".7"><ellipse cx="16" cy="14.500" rx="10" ry="4" /><ellipse cx="16" cy="14.500" rx="10" ry="4" transform="rotate(45 16 14.500)" /><ellipse cx="16" cy="14.500" rx="10" ry="4" transform="rotate(90 16 14.500)" /><ellipse cx="16" cy="14.500" rx="10" ry="4" transform="rotate(135 16 14.500)" /></g>
              <circle cx="16" cy="14.500" r="3.300" fill="#a8801c" />
            </svg>
            <UniAr>جامعة حلوان</UniAr><UniEn>HELWAN UNIVERSITY</UniEn>
          </UniBlock>
        </PaperHead>
        <Line $h={22} $f={11.100} $sans $caps>Helwan University</Line>
        <Line $h={23} $f={10.950} $sans>Faculty of Computers and Artificial Intelligence</Line>
        <Line $h={23} $f={10.900} $sans>Computer Science Department</Line>
        <Line $h={42} $f={26}>E-PROVA</Line>
        <Line $h={25} $f={10.250}>A graduation project dissertation by:</Line>
        {students.map(([n, id]) => <Student key={id}><span>{n}</span><span>{id}</span></Student>)}
        <Line $h={17.6} $f={10.200} $mt={24.5}>Submitted in partial fulfilment of the requirements for the degree of Bachelor</Line>
        <Line $h={17.6} $f={10.200}>of Science in Computers &amp; Artificial Intelligence, at the Computer Science</Line>
        <Line $h={17.6} $f={10.200}>Department, the Faculty of Computers &amp; Artificial Intelligence, Helwan</Line>
        <Line $h={17.6} $f={10.200}>University</Line>
        <Line $h={22} $f={10.300} $sans $mt={7}>Supervised by:</Line>
        <Line $h={28} $f={11.700} $sans $mt={2}>[ Dr. Ahmed Hesham ]</Line>
        <Line $h={18} $f={10.200} $mt={5.5}>(June 2025)</Line>
        <Cursor><svg width="6" height="12" viewBox="0 0 6 12" fill="none" stroke="#333" strokeWidth=".9"><path d="M.5.5Q3 .5 3 2q0-1.500 2.500-1.500M3 2v8M.5 11.500Q3 11.500 3 10q0 1.500 2.500 1.500" /></svg></Cursor>
      </Paper>
      <ScrollCol>
        <svg width="8" height="7" viewBox="0 0 8 7"><path d="M4 0l4 7H0z" fill="currentColor" /></svg>
        <Thumb />
        <svg width="8" height="6" viewBox="0 0 8 6"><path d="M4 6L0 0h8z" fill="currentColor" /></svg>
      </ScrollCol>
      <SharePop><PauseBars /><PopText>meet.google.com is sharing your screen.</PopText><StopBtn>Stop sharing</StopBtn><HideLink>Hide</HideLink></SharePop>
    </Viewer>
    <InnerTask>
      <Weather>
        <svg width="20" height="26" viewBox="0 0 20 26"><path d="M15 8a8 8 0 1 1-13 8q8 3 13-8z" fill="#f5a11d" /><path d="M2 12q-2-4 2-5 2-5 6-1l2 6z" fill="#c9d8ee" /></svg>
        <CountBadge $l={9} $t={-1}>8</CountBadge>
      </Weather>
      <WeatherText><Degrees>23°C</Degrees><Sky>صافٍ غالبًا</Sky></WeatherText>
      <Cell $w={19} $ml={197.5}>
        <svg width="19" height="19" viewBox="0 0 19 19"><path d="M0 0h9v9H0zM10 0h9v9h-9zM0 10h9v9H0zM10 10h9v9h-9z" fill="#3fb4f7" /></svg>
      </Cell>
      <SearchPill>
        <Search size={13} strokeWidth={2} /><span>Search</span>
        <svg width="41" height="22" viewBox="0 0 37 20" fill="none">
          <path d="M0 18q18-4 37 0v2H0z" fill="#e0b75c" /><path d="M12 20q12-3 25-1v1z" fill="#39a3a8" />
          <path d="M5 4q-1.500-3.500 1.500-3.500T8 4Q6.500 6.500 9 8q5.500-1 5 1.500Q11 12.500 7 11 2.500 9 5 4zM10 11l-1 7.500M12 11l1.500 7" stroke="#ee6d84" strokeWidth="1.300" />
          <path d="M6.500 9.500q3 2 7-.5" stroke="#f58ea0" strokeWidth="2" />
          <path d="M19 7.500q2-2 2.500 1-.5 4 1 5 3.500 1.500 5-1-2-.5-3.500-1.500M29 10q2-2 2.200.8 0 3 1.300 3.700 2.500 1 4-1" stroke="#d5dbe0" strokeWidth="1.300" />
          <path d="M22 12.500q3 2 5 .5M32 13.500q2 1.500 3.500.5" stroke="#e9edf0" strokeWidth="2" />
        </svg>
        <Cell $w={3} />
      </SearchPill>
      <Cell $w={1} />
      <TaskIcon><svg width="20" height="18" viewBox="0 0 20 18"><rect x="6" y="0" width="14" height="14" fill="#ececec" /><rect x="0" y="5" width="14" height="12" fill="#8d8f90" opacity=".85" /></svg></TaskIcon>
      <TaskIcon $run><FaWhatsapp size={21} color="#2fd366" /><CountBadge $l={18} $t={3}>8</CountBadge></TaskIcon>
      <TaskIcon><CopilotLogo s={19} /></TaskIcon>
      <TaskIcon $on><EdgeLogo s={20} /></TaskIcon>
      <TaskIcon $run><FolderLogo s={20} /></TaskIcon>
      <TaskIcon><BoxLogo s={18} /></TaskIcon>
      <TaskIcon $run><WordLogo s={18} /></TaskIcon>
      <TaskIcon $run><CodeLogo s={19} hole="#2c2316" /></TaskIcon>
      <TaskIcon $run><PostmanLogo s={19} /></TaskIcon>
      <TaskIcon $run><MongoLogo s={18} /></TaskIcon>
      <Cell $w={14} $ml={68.5}><ChevronUp size={13} strokeWidth={2} /></Cell>
      <Cell $w={14} $ml={11.5}><svg width="10" height="14" viewBox="0 0 10 14" fill="none" stroke="#cdd6ee" strokeWidth="1.500"><circle cx="5" cy="8.500" r="3.200" /><path d="M2 3.500q3-3.500 6 0" /></svg></Cell>
      <Cell $w={14} $ml={12}><svg width="15" height="14" viewBox="0 0 15 14" fill="none" stroke="#ccc" strokeWidth="1.300"><path d="M1 6q1-5 6-5 4 0 5 3M12 1v3.500H8.500M1 9v4h4M1 10q2 3 5 3" /><circle cx="11" cy="10" r="3.700" fill="#f02a1d" stroke="none" /></svg></Cell>
      <Cell $w={14} $ml={11.5} $c="#c9805f"><Mic size={14} strokeWidth={1.800} /></Cell>
      <ArLetter>ع</ArLetter>
      <Cell $w={14} $ml={16.5}><Wifi size={14} strokeWidth={2} /></Cell>
      <Cell $w={14} $ml={5}><Volume2 size={14} strokeWidth={1.800} /></Cell>
      <Cell $w={14} $ml={5}><svg width="13" height="12" viewBox="0 0 13 12"><rect x="1" y="3" width="11" height="7.500" rx="1.500" fill="#e8e8e8" /><path d="M12.500 5v3.500M2 0l-1 4h3L2 8" stroke="#e8e8e8" fill="none" /><path d="M3 4v4" stroke="#2c2211" strokeWidth="1" /></svg></Cell>
      <InnerClock>5:33 AM<br />6/11/2025</InnerClock>
    </InnerTask>
  </Shared>
);

/* ---------- Meet ---------- */

const Meet = styled.div`height: 879px; flex: none; display: flex; flex-direction: column; padding: 20px 20px 0; font-family: ${GOOGLE};`;
const Banner = styled.div`
  height: 50px; flex: none; border-radius: 10px; background: #3c4043; display: flex; align-items: center; padding-left: 20px; gap: 20px;
  font-size: 17.500px; font-weight: 500; letter-spacing: 0.080px;
`;
const Stage = styled.div`display: flex; margin-top: 20px; padding-left: 20px; gap: 20px; height: 689px; flex: none; font-family: ${SEGOE};`;
const Tiles = styled.div`display: flex; flex-direction: column; gap: 15px; padding-top: 1px; width: 597px; font-family: ${GOOGLE};`;
const Tile = styled.div<{ $purple?: boolean }>`
  flex: none; height: ${p => (p.$purple ? 337 : 336)}px; border-radius: 20px; display: flex; align-items: center; justify-content: center; position: relative;
  ${p => p.$purple
    ? css`border: 3px solid #cdbbff;
      background: radial-gradient(ellipse 14% 44% at 50% 0%, rgba(62,22,132,.7), rgba(62,22,132,0)),
        radial-gradient(ellipse 42% 80% at 50% 52%, rgba(107,70,175,.95) 0%, rgba(104,66,172,.9) 35%, rgba(86,46,158,.5) 68%, rgba(70,27,152,0) 100%),
        radial-gradient(ellipse 72% 76% at 50% 50%, #471b99 0%, #451a97 55%, #3d1585 80%, #331070 100%);`
    : css`background: radial-gradient(ellipse 14% 44% at 50% 0%, rgba(10,80,72,.7), rgba(10,80,72,0)),
        radial-gradient(ellipse 42% 80% at 50% 52%, rgba(54,122,113,.95) 0%, rgba(50,118,109,.9) 35%, rgba(26,104,94,.5) 68%, rgba(3,92,81,0) 100%),
        radial-gradient(ellipse 72% 76% at 50% 50%, #035c51 0%, #035a50 55%, #034f46 80%, #04423b 100%);`}
`;
const Halo = styled.div<{ $s: number; $bg: string }>`width: ${p => p.$s}px; height: ${p => p.$s}px; border-radius: 50%; background: ${p => p.$bg}; display: flex; align-items: center; justify-content: center;`;
const Face = styled.div<{ $s: number; $bg: string; $b: string }>`
  width: ${p => p.$s}px; height: ${p => p.$s}px; border-radius: 50%; background: ${p => p.$bg}; border: ${p => p.$b}; display: flex; align-items: center; justify-content: center;
  font: 400 48px Roboto, sans-serif; color: #fff;
`;
const Name = styled.div<{ $l: number; $b: number }>`
  position: absolute; left: ${p => p.$l}px; bottom: ${p => p.$b}px; font-size: 19px; line-height: 24px; font-weight: 500; letter-spacing: 0.15px; text-shadow: 0 1px 3px rgba(0,0,0,.6);
`;
const Controls = styled.div`height: 60px; margin-top: 20px; display: flex; align-items: center; flex: none; position: relative; color: #e3e3e3;`;
const TimeCode = styled.div`
  width: 588px; display: flex; align-items: center; padding-left: 10px; font-size: 19.500px; font-weight: 500; color: #fff; letter-spacing: 0.080px; flex: none; white-space: nowrap;
  span { width: 92px; letter-spacing: -0.350px; }
`;
const Btn = styled.div<{ $w: number; $bg?: string; $r?: number; $c?: string }>`
  width: ${p => p.$w}px; height: 60px; border-radius: ${p => p.$r ?? 30}px; background: ${p => p.$bg ?? '#333537'}; color: ${p => p.$c ?? '#e3e3e3'};
  display: flex; align-items: center; justify-content: center; margin-right: 10px; flex: none;
`;
const Group = styled.div<{ $bg: string; $r: number }>`
  width: 110px; height: 60px; border-radius: ${p => p.$r}px; background: ${p => p.$bg}; display: flex; align-items: center; flex: none; margin-right: 10px; padding-left: 7px;
  & > ${Btn} { margin: 0; }
`;
const MeetRight = styled.div`display: flex; align-items: center; margin-left: auto; padding-right: 10px; gap: 30px; color: #fff;`;
const PeopleBadge = styled.div`position: absolute; left: 16.5px; top: -26px; width: 25px; height: 25px; border-radius: 50%; background: #5f6368; font-size: 14px; font-weight: 600; line-height: 25px; text-align: center;`;

const MeetView = () => (
  <Meet>
    <Banner><Round $s={30} $bg="#512da8" $f={17}>M</Round>Mariam Fathi (Presenting)</Banner>
    <Stage>
      <SharedScreen />
      <Tiles>
        <Tile $purple>
          <Halo $s={109} $bg="rgba(140,108,200,.5)"><Face $s={96} $bg="#512da8" $b="3px solid #d0bcff">M</Face></Halo>
          <Name $l={12} $b={10}>Mariam Fathi</Name>
        </Tile>
        <Tile>
          <Halo $s={117} $bg="rgba(60,150,138,.55)"><Face $s={92} $bg="#00897b" $b="1px solid #4fd8c4">M</Face></Halo>
          <Name $l={15} $b={13}>Mariam Elsaid</Name>
        </Tile>
      </Tiles>
    </Stage>
    <Controls>
      <TimeCode><span>5:33 AM</span><VLine $w={1} $h={20} $c="#cfcfcf" $mr={15.500} />daa-pquw-gsh</TimeCode>
      <Group $bg="#28292b" $r={30}>
        <Cell $w={43} $c="#a8c7fa"><svg width="19" height="5" viewBox="0 0 19 5" fill="currentColor"><circle cx="2" cy="2.500" r="1.900" /><circle cx="9.500" cy="2.500" r="1.900" /><circle cx="17" cy="2.500" r="1.900" /></svg></Cell>
        <Btn $w={60}><MdMicNone size={30} /></Btn>
      </Group>
      <Group $bg="#601410" $r={16}>
        <Cell $w={43} $c="#f9dedc"><MdKeyboardArrowUp size={27} /></Cell>
        <Btn $w={60} $bg="#f9dedc" $r={16} $c="#601410"><MdOutlineVideocamOff size={30} /></Btn>
      </Group>
      <Btn $w={70}>
        <svg width="30" height="30" viewBox="0 0 24 24" fill="none"><path d="M5 3.500h14q1 0 1 1V17H4V4.500q0-1 1-1z" stroke="currentColor" strokeWidth="2" /><path d="M1 19h22v2.300H1z" fill="currentColor" /><path d="M12 5.800l4.200 4.200-1.400 1.400L13 9.600V14.500h-2V9.600l-1.800 1.800L7.800 10z" fill="currentColor" /></svg>
      </Btn>
      <Btn $w={70}><MdOutlineMood size={30} /></Btn>
      <Btn $w={70}><MdOutlineClosedCaption size={30} /></Btn>
      <Btn $w={70}><MdOutlineBackHand size={28} /></Btn>
      <Btn $w={45}><MdMoreVert size={34} /></Btn>
      <Btn $w={90} $bg="#dc362e" $c="#fff"><MdOutlineCallEnd size={30} /></Btn>
      <MeetRight>
        <Cell $w={30}><MdInfoOutline size={31} /></Cell>
        <Cell $w={30}><GroupIcon s={31} /><PeopleBadge>3</PeopleBadge></Cell>
        <Cell $w={30}><MdOutlineChat size={31} /></Cell>
        <Cell $w={30}><MdApps size={32} /></Cell>
      </MeetRight>
    </Controls>
  </Meet>
);

/* ---------- Windows taskbar ---------- */

const Taskbar = styled.div`height: 50px; flex: none; background: #3b1d78; display: flex; align-items: center; position: relative;`;
const Pinned = styled.div<{ $w?: number; $line?: boolean; $on?: boolean }>`
  width: ${p => p.$w ?? 61.8}px; height: 50px; display: flex; align-items: center; justify-content: center; flex: none; position: relative;
  ${p => p.$line && css`&::after { content: ''; position: absolute; bottom: 0; left: ${p.$on ? 0 : 5.5}px; right: ${p.$on ? 0 : 5.5}px; height: 3px; background: #a899c9; }`}
  ${p => p.$on && css`&::before { content: ''; position: absolute; inset: 0; background: #5a2ba8; border-right: 4px solid #4a2490; } svg { position: relative; }`}
`;
const BadgeM = styled.span`position: absolute; left: 28.5px; top: 22px; width: 19px; text-align: center; font: 400 13px/20px Roboto, sans-serif; color: #dff3ef;`;
const LTile = styled.div`width: 30px; height: 30px; background: #1b47ae; display: flex; align-items: center; justify-content: center; font: 600 24px/30px "Open Sans", sans-serif;`;
const Tray = styled.div`display: flex; align-items: center; margin-left: auto; margin-right: 25px;`;
const Clock = styled.div`width: 84px; margin-left: 8px; text-align: center; font-size: 15px; line-height: 23px; letter-spacing: -0.45px; white-space: nowrap;`;
const Lang = styled.div`margin-left: 13px; width: 29px; font-size: 15px; letter-spacing: -0.8px;`;
const NoteBadge = styled.div`position: absolute; left: 9px; top: 8px; width: 20px; height: 20px; border-radius: 50%; background: #5a2ba8; border: 1px solid #9a7fd0; font-size: 15px; font-weight: 600; line-height: 18px; text-align: center;`;

const WinBar = () => (
  <Taskbar>
    <Pinned $w={60}><svg width="20" height="20" viewBox="0 0 20 20" fill="#fff"><path d="M0 2.800L8.500 1.500V9.500H0zM9.300 1.400L20 0V9.500H9.300zM0 10.300h8.500v8L0 17.200zM9.300 10.300H20V20L9.300 18.500z" /></svg></Pinned>
    <Pinned $w={60}><svg width="29" height="29" viewBox="0 0 29 29" fill="none" stroke="#fff"><circle cx="17" cy="11.500" r="10" strokeWidth="2.400" /><path d="M10 19L1 28" strokeWidth="2.700" /></svg></Pinned>
    <Pinned $w={59}><svg width="20" height="20" viewBox="0 0 20 20" fill="none" stroke="#fff" strokeWidth="1.200"><path d="M.6 0v3.500h12.500V0M.6 20v-3.500h12.500V20M.6 6h12.500v8H.6zM18.500 0v5M18.500 11v9" /><path d="M17 6.500h3v3h-3z" fill="#fff" stroke="none" /></svg></Pinned>
    <Pinned $w={67}><CopilotLogo s={30} /></Pinned>
    <Pinned><YoutubeLogo s={30} /></Pinned>
    <Pinned $line><ExplorerLogo s={27} /></Pinned>
    <Pinned><StoreLogo s={30} /></Pinned>
    <Pinned><OutlookLogo s={30} /></Pinned>
    <Pinned><EdgeLogo s={30} user /></Pinned>
    <Pinned><ChromeLogo s={30} /></Pinned>
    <Pinned><TeamsLogo s={30} /></Pinned>
    <Pinned $w={62}><LTile>L</LTile></Pinned>
    <Pinned $w={62}><CodeLogo s={30} /></Pinned>
    <Pinned $w={63}><WpsLogo s={30} /><RunLine /></Pinned>
    <Pinned $w={61} $line $on><ChromeLogo s={31} badge /><BadgeM>M</BadgeM></Pinned>
    <Pinned $w={62.5} $line><PaintLogo s={30} /></Pinned>
    <Pinned $w={62} $line><TeamsLogo s={30} ok /></Pinned>
    <Tray>
      <Cell $w={18}><svg width="17" height="10" viewBox="0 0 17 10" fill="none" stroke="#fff" strokeWidth="1.300"><path d="M.5 9l8-8 8 8" /></svg></Cell>
      <Cell $w={18} $ml={11}><svg width="14" height="20" viewBox="0 0 14 20" fill="none" stroke="#fff"><rect x="3" y="0.500" width="8" height="14" rx="1" fill="#fff" /><path d="M.7 11v3q0 2 2 2h8.600q2 0 2-2v-3M7 16v3.500M3.500 19.500h7" strokeWidth="1.200" /></svg></Cell>
      <Cell $w={22} $ml={11}><svg width="21" height="21" viewBox="0 0 21 21"><path d="M1 3q5 0 9-3 4 3 9 3v8q-1 6-9 9-8-3-9-9z" fill="#fff" stroke="#111" /><path d="M10 0v20M1 9.500h18" stroke="#111" strokeWidth="1.300" /><circle cx="15.500" cy="15" r="5.500" fill="#1a8a3c" /><path d="M13 15l2 2 3-3.500" stroke="#fff" strokeWidth="1.300" fill="none" /></svg></Cell>
      <Cell $w={20} $ml={9}><svg width="20" height="16" viewBox="0 0 20 16" fill="none" stroke="#fff"><rect x="5" y="4" width="13" height="9.500" /><rect x="7" y="6" width="10" height="5.500" fill="#fff" /><path d="M19.300 7v3.500M1 1v2h4V1M.5 3.500h5V6H.5zM3 6v6h2" /></svg></Cell>
      <Cell $w={21} $ml={9}><svg width="21" height="18" viewBox="0 0 21 18" fill="none" stroke="#fff" strokeWidth="1.100"><path d="M.6 6H3.500L7.500 2v14L3.500 12H.6zM10 6q2 3 0 6M13 4q3.500 5 0 10" /><path d="M16 2q5 7 0 14" opacity=".5" /></svg></Cell>
      <Cell $w={18} $ml={11}><svg width="17" height="17" viewBox="0 0 17 17" fill="none" stroke="#fff" strokeWidth="1.100"><path d="M1 16Q1 2 16 1M5 16q0-10 11-11M9 16q0-6 7-7" /><circle cx="14.500" cy="14.500" r="1.800" fill="#fff" stroke="none" /></svg></Cell>
      <Cell $w={20} $ml={15}><svg width="20" height="21" viewBox="0 0 20 21" fill="none" stroke="#fff" strokeWidth="1.200"><path d="M13 1.500q2.500-1.500 3 .5l-5.500 15-3 2.500v-4zM10 9Q3 8.500 2 13.500q-2.500 5 .5 6 2.500 0 4-5Q9 11 12 10.500q6-2 7-.5-.5 2-4 2" /></svg></Cell>
      <Cell $w={30} $ml={15}><svg width="30" height="20" viewBox="0 0 30 20" fill="none" stroke="#fff"><rect x=".6" y=".6" width="28.800" height="18.800" strokeWidth="1.200" /><path d="M4 5.500h22M4 9.500h22" strokeWidth="1.400" strokeDasharray="1.500 1.500" /><path d="M4 14h2M8 14h14M24 14h2" strokeWidth="1.300" /></svg></Cell>
      <Lang>ENG</Lang>
      <Clock>5:33 AM<br />6/11/2025</Clock>
      <Cell $w={20} $ml={16}><svg width="20" height="20" viewBox="0 0 20 20"><path d="M0 0h20v17H9l-4 3v-3H0z" fill="#fff" /><path d="M4 4.500h12M4 8.500h12M4 12.500h8" stroke="#3b1d78" strokeWidth="1.300" /></svg><NoteBadge>4</NoteBadge></Cell>
    </Tray>
    <VLine $w={1} $h={50} $c="#8f7bb8" $mr={5} />
  </Taskbar>
);
const RunLine = styled.i`position: absolute; bottom: 0; left: 7px; width: 51px; height: 3px; background: #a899c9;`;

export default function App() {
  return (
    <Screen>
      <Global />
      <ChromeHead />
      <MeetView />
      <WinBar />
    </Screen>
  );
}
